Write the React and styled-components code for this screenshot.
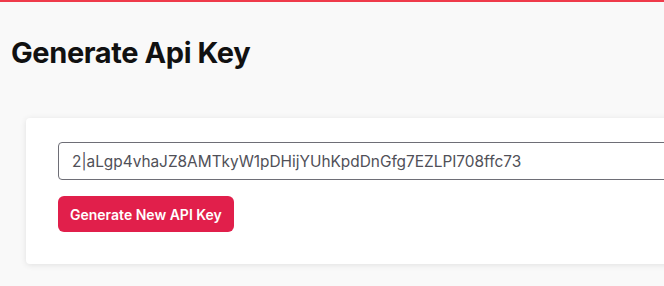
import React from "react";
import styled, { createGlobalStyle } from "styled-components";

const GlobalStyle = createGlobalStyle`
  html, body {
    margin: 0;
    padding: 0;
    background: #f9f9f9;
    font-family: Inter, "Noto Sans", sans-serif;
    overflow: hidden;
  }
`;

const Page = styled.div`
  min-height: 286px;
  border-top: 2px solid #ef3b4b;
  box-sizing: border-box;
`;

const Title = styled.h1`
  margin: 0;
  padding: 33px 0 0 11px;
  font-size: 29px;
  line-height: 36px;
  font-weight: 700;
  color: #111;
  letter-spacing: -0.4px;
`;

const Card = styled.section`
  margin: 47px 0 0 26px;
  width: 720px;
  background: #fff;
  border-radius: 4px;
  box-shadow: 0 1px 6px rgba(0, 0, 0, 0.1);
  padding: 24px 32px 32px;
  box-sizing: border-box;
  display: flex;
  flex-direction: column;
  align-items: flex-start;
  gap: 16px;
`;

const KeyInput = styled.input`
  width: 100%;
  height: 38px;
  box-sizing: border-box;
  border: 1px solid #6e6e76;
  border-radius: 4px;
  padding: 0 13px;
  font-family: Inter, sans-serif;
  font-size: 15.4px;
  color: #505058;
  background: #fff;
  outline: none;
`;

const Button = styled.button`
  height: 36px;
  padding: 0 12px;
  border: none;
  border-radius: 6px;
  background: #e11f4b;
  color: #fff;
  font-family: Inter, sans-serif;
  font-size: 14px;
  font-weight: 600;
  cursor: pointer;
`;

export default function App() {
  return (
    <>
      <GlobalStyle />
      <Page>
        <Title>Generate Api Key</Title>
        <Card>
          <KeyInput
            readOnly
            value="2|aLgp4vhaJZ8AMTkyW1pDHijYUhKpdDnGfg7EZLPI708ffc73"
          />
          <Button>Generate New API Key</Button>
        </Card>
      </Page>
    </>
  );
}
